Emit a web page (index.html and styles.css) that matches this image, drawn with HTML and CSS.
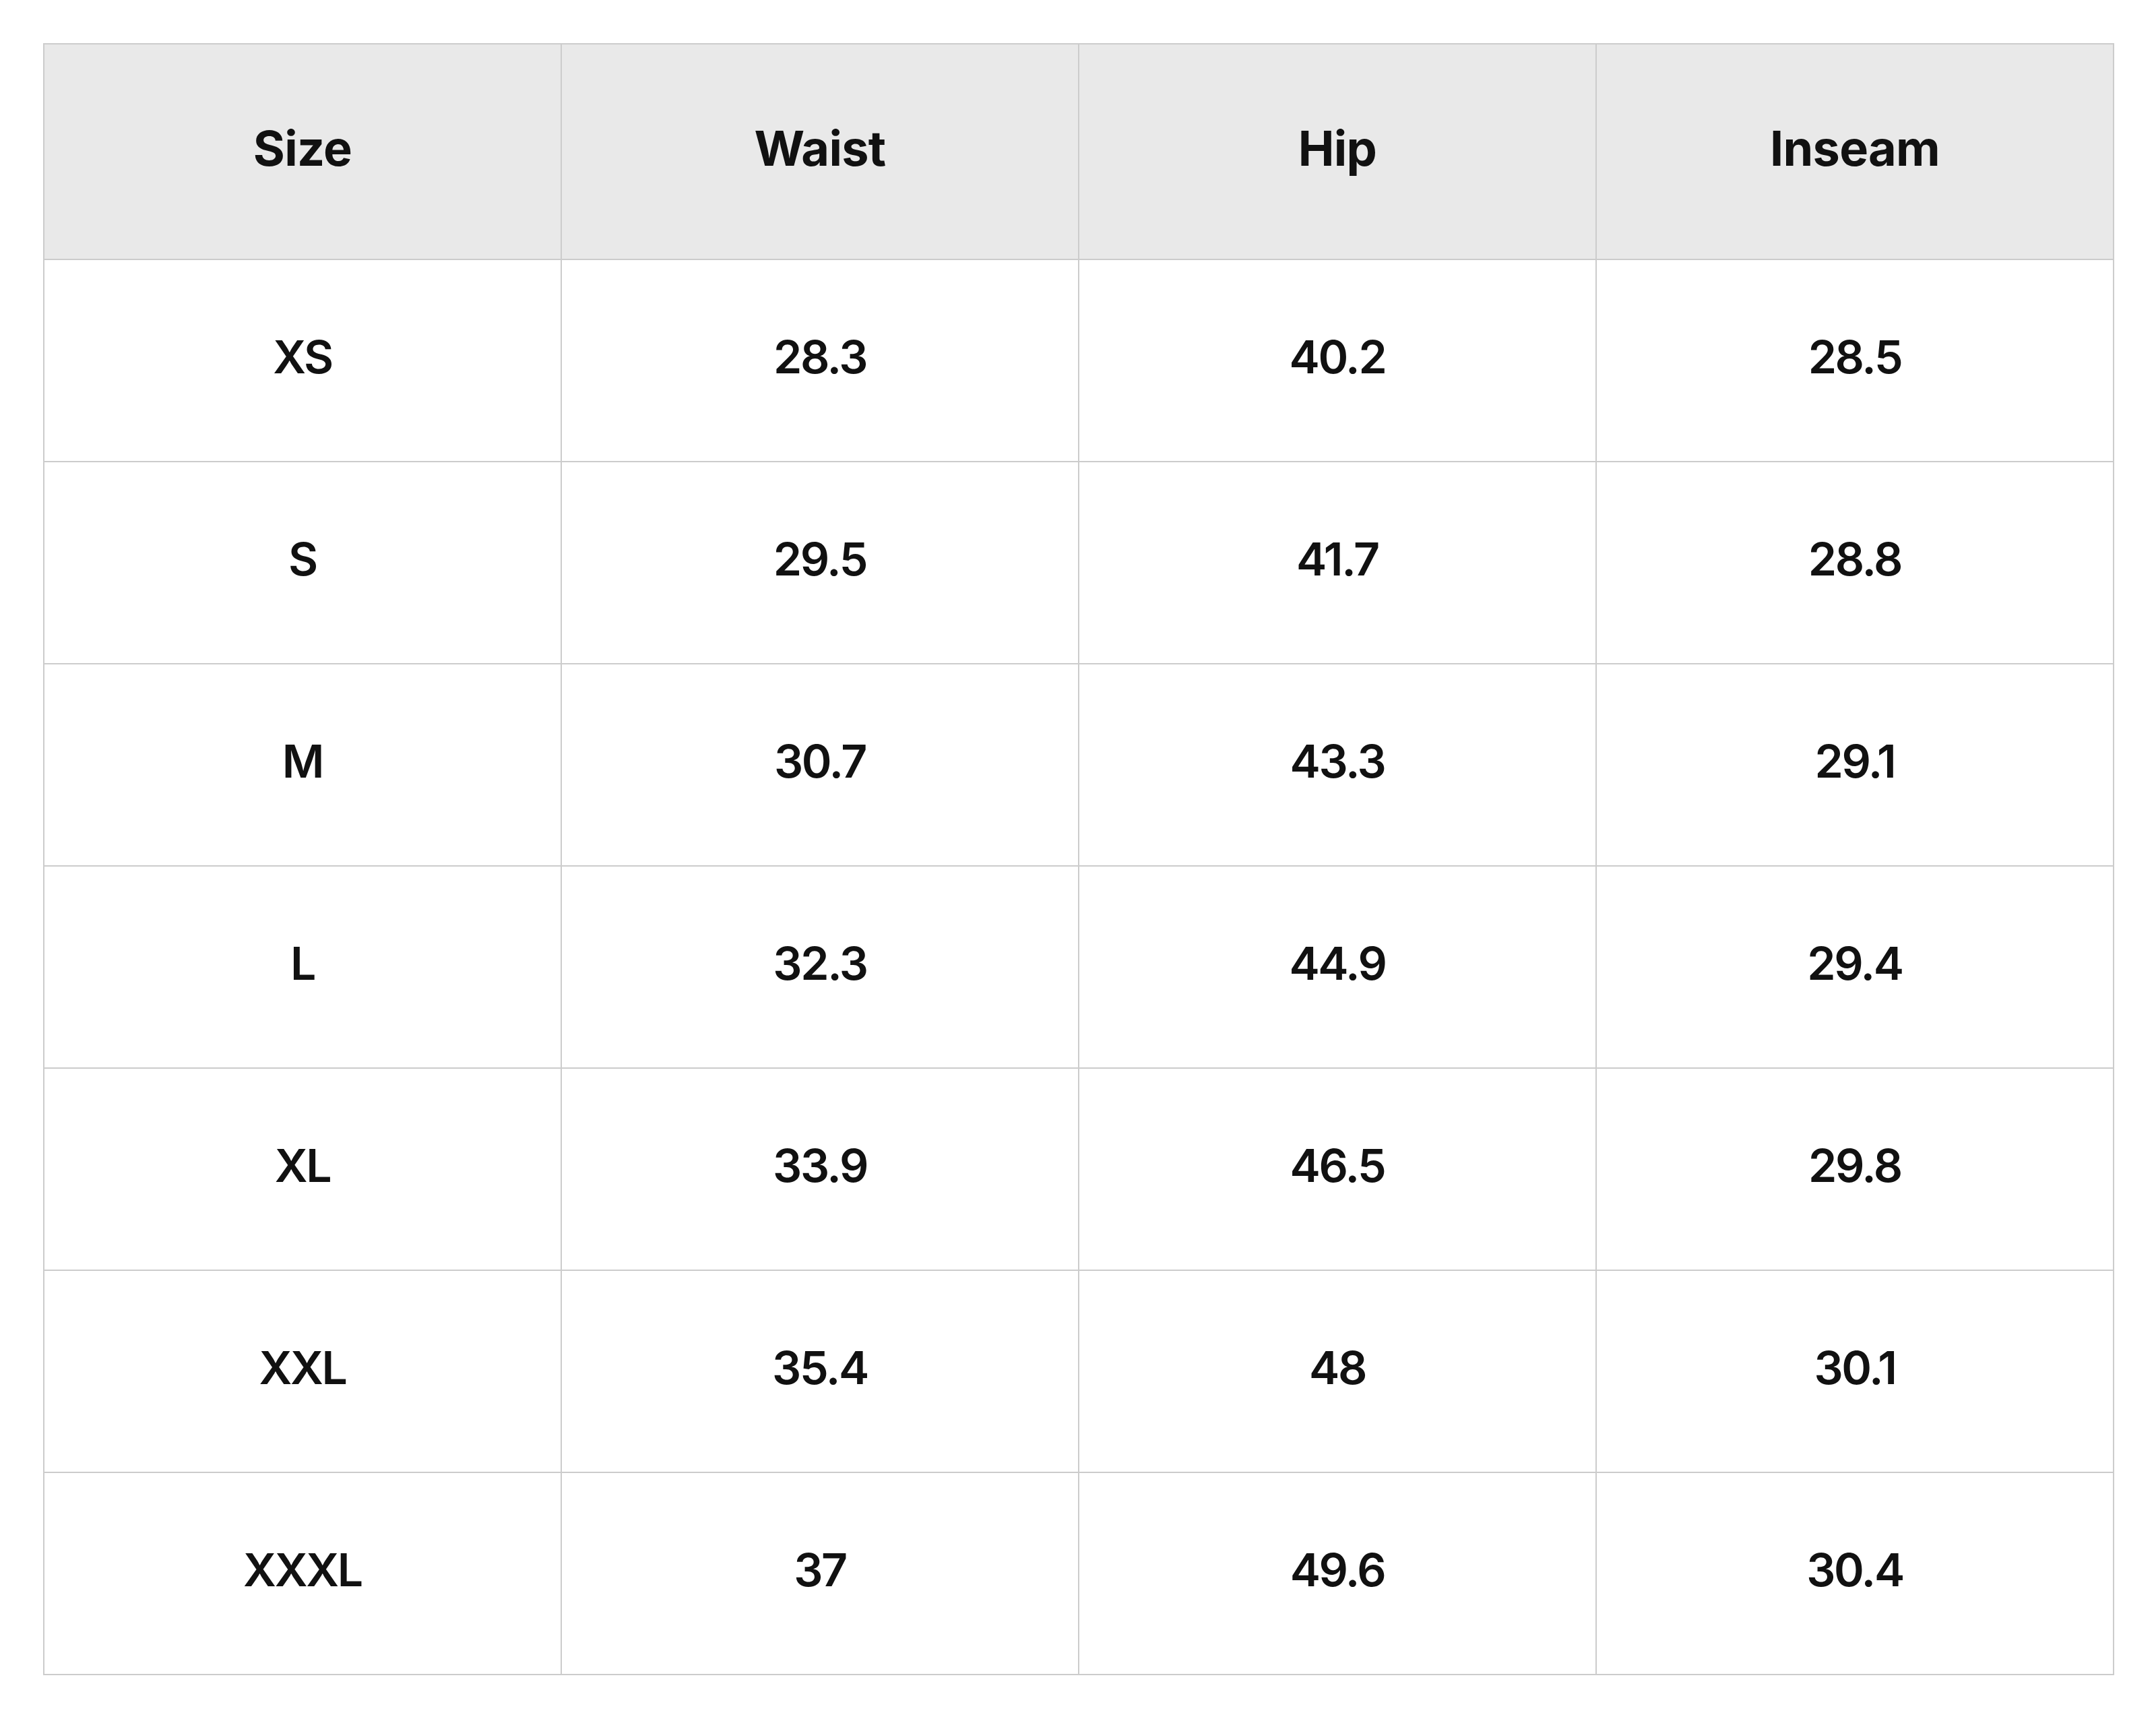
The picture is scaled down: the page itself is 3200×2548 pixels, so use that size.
FILE: index.html
```html
<!DOCTYPE html>
<html lang="en">
<head>
<meta charset="utf-8">
<title>Size chart</title>
<link rel="stylesheet" href="styles.css">
</head>
<body>
<table class="size-table">
  <thead>
    <tr class="head-row">
      <th>Size</th><th>Waist</th><th>Hip</th><th>Inseam</th>
    </tr>
  </thead>
  <tbody>
    <tr><td>XS</td><td>28.3</td><td>40.2</td><td>28.5</td></tr>
    <tr><td>S</td><td>29.5</td><td>41.7</td><td>28.8</td></tr>
    <tr><td>M</td><td>30.7</td><td>43.3</td><td>29.1</td></tr>
    <tr><td>L</td><td>32.3</td><td>44.9</td><td>29.4</td></tr>
    <tr><td>XL</td><td>33.9</td><td>46.5</td><td>29.8</td></tr>
    <tr><td>XXL</td><td>35.4</td><td>48</td><td>30.1</td></tr>
    <tr><td>XXXL</td><td>37</td><td>49.6</td><td>30.4</td></tr>
  </tbody>
</table>
</body>
</html>
```
FILE: styles.css
```css
html, body {
  margin: 0;
  background: #ffffff;
}
body {
  padding: 64px;
  font-family: Inter, "Liberation Sans", sans-serif;
  color: #111111;
}
.size-table {
  width: 3074px;
  border-collapse: collapse;
  table-layout: fixed;
}
.size-table th,
.size-table td {
  border: 2px solid #cccccc;
  text-align: center;
  vertical-align: middle;
  padding: 0 0 12px 0;
}
.size-table th {
  background: #e9e9e9;
  font-size: 72px;
  font-weight: 700;
  letter-spacing: -0.01em;
  height: 306px;
}
.size-table td {
  font-size: 68px;
  font-weight: 600;
  letter-spacing: -0.035em;
  height: 286px;
}
```
